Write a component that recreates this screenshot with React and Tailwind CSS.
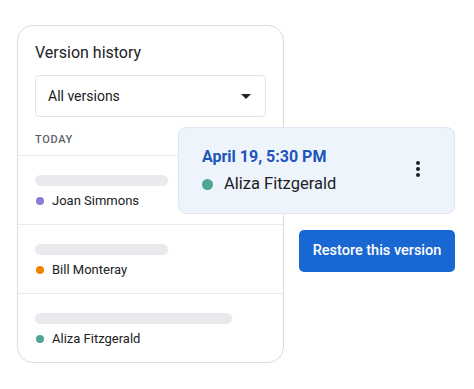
import React from 'react';

const rows = [
  { name: 'Joan Simmons', dot: 'bg-[#8a7bd6]', bar: 'w-[133px]' },
  { name: 'Bill Monteray', dot: 'bg-[#f08300]', bar: 'w-[133px]' },
  { name: 'Aliza Fitzgerald', dot: 'bg-[#4fa596]', bar: 'w-[197px]' },
];

const App = () => {
  return (
    <div className="relative w-[474px] h-[389px] bg-white font-['Roboto',sans-serif] text-[#202124]">
      <div className="absolute left-[17px] top-[25px] w-[267px] border border-[#dadce0] rounded-[16px] bg-white">
        <div className="px-[17px] pt-[15px]">
          <h1 className="text-[16px] leading-6">Version history</h1>
          <div className="mt-[10px] h-[42px] border border-[#e3e3e3] rounded-[4px] flex items-center justify-between pl-[12px] pr-[12px]">
            <span className="text-[14px]">All versions</span>
            <svg width="10" height="5" viewBox="0 0 10 5" className="mr-[2px]">
              <path d="M0 0h10L5 5z" fill="#202124" />
            </svg>
          </div>
          <div className="mt-[15px] pb-[7px] text-[11px] leading-4 font-medium tracking-[0.06em] text-[#5f6368]">TODAY</div>
        </div>
        {rows.map((row) => (
          <div key={row.name} className="border-t border-[#e8eaed] px-[17px] pt-[19px] pb-[13px] flex flex-col gap-[5px]">
            <div className={`h-[11px] rounded-full bg-[#e8eaed] ${row.bar}`} />
            <div className="flex items-center h-5">
              <span className={`w-[8px] h-[8px] rounded-full ${row.dot} ml-[1px]`} />
              <span className="ml-[8px] text-[13px]">{row.name}</span>
            </div>
          </div>
        ))}
      </div>

      <div className="absolute left-[178px] top-[127px] w-[277px] h-[87px] rounded-[8px] bg-[#eef4fc] border border-[#dfe7f2] flex items-center justify-between pl-[23px] pr-[34px]">
        <div className="flex flex-col">
          <span className="text-[16px] leading-5 font-bold text-[#1d55b8]">April 19, 5:30 PM</span>
          <div className="flex items-center mt-[7px]">
            <span className="w-[11px] h-[11px] rounded-full bg-[#4fa596]" />
            <span className="ml-[11px] text-[16.5px] leading-5">Aliza Fitzgerald</span>
          </div>
        </div>
        <div className="flex flex-col gap-[1.5px] -mt-[3px]">
          <span className="w-[4.5px] h-[4.5px] rounded-full bg-[#202124]" />
          <span className="w-[4.5px] h-[4.5px] rounded-full bg-[#202124]" />
          <span className="w-[4.5px] h-[4.5px] rounded-full bg-[#202124]" />
        </div>
      </div>

      <button className="absolute left-[299px] top-[230px] w-[156px] h-[42px] rounded-[5px] bg-[#1967d2] text-white text-[14.5px] font-medium">
        Restore this version
      </button>
    </div>
  );
};

export default App;
